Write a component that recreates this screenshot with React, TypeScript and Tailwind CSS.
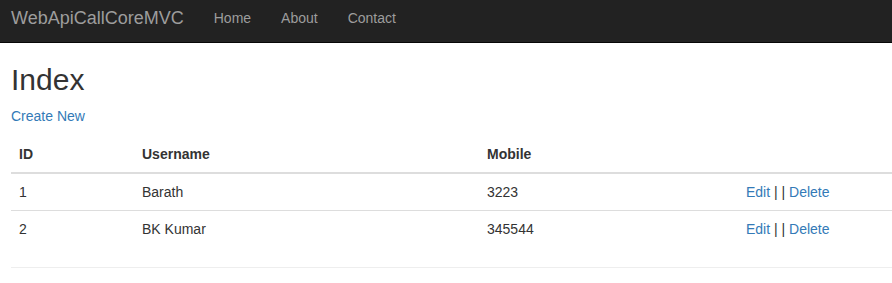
import React from 'react';

const rows = [
  { id: 1, username: 'Barath', mobile: '3223' },
  { id: 2, username: 'BK Kumar', mobile: '345544' },
];

export default function App() {
  return (
    <div className="min-h-screen bg-white text-[14px] leading-[20px] text-[#333] font-['Liberation_Sans',Arial,sans-serif]">
      {/* Navbar */}
      <nav className="h-[43px] bg-[#222] border-b border-[#080808] flex items-start pt-[8px] pl-[11px]">
        <a href="#" className="text-[18px] leading-[20px] text-[#9d9d9d] pr-[15px]">
          WebApiCallCoreMVC
        </a>
        <ul className="flex">
          {['Home', 'About', 'Contact'].map((item) => (
            <li key={item}>
              <a href="#" className="block px-[15px] text-[#9d9d9d]">
                {item}
              </a>
            </li>
          ))}
        </ul>
      </nav>

      <div className="pl-[11px]">
        <h2 className="text-[30px] leading-[33px] mt-[20px] mb-[10px] font-normal">Index</h2>
        <p className="mb-[10px]">
          <a href="#" className="text-[#337ab7]">Create New</a>
        </p>

        <table className="w-full border-collapse mb-[20px]">
          <thead>
            <tr className="border-b-2 border-[#ddd]">
              <th className="w-[123px] p-[8px] text-left font-bold">ID</th>
              <th className="w-[345px] p-[8px] text-left font-bold">Username</th>
              <th className="w-[259px] p-[8px] text-left font-bold">Mobile</th>
              <th className="p-[8px]"></th>
            </tr>
          </thead>
          <tbody>
            {rows.map((r, i) => (
              <tr key={r.id} className={i > 0 ? 'border-t border-[#ddd]' : ''}>
                <td className="p-[8px]">{r.id}</td>
                <td className="p-[8px]">{r.username}</td>
                <td className="p-[8px]">{r.mobile}</td>
                <td className="p-[8px]">
                  <a href="#" className="text-[#337ab7]">Edit</a> | |{' '}
                  <a href="#" className="text-[#337ab7]">Delete</a>
                </td>
              </tr>
            ))}
          </tbody>
        </table>

        <hr className="border-t border-[#eee]" />
      </div>
    </div>
  );
}
